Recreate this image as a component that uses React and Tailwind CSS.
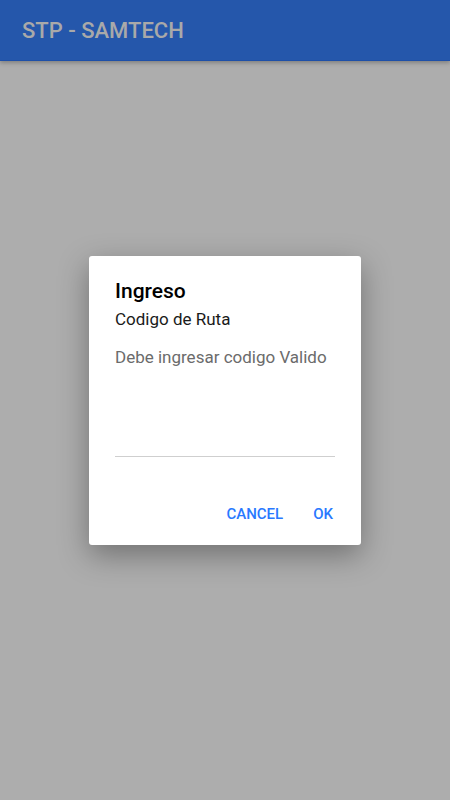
import React from "react";

const font = { fontFamily: "Roboto, 'Noto Sans', sans-serif" };

export default function App() {
  return (
    <div className="flex flex-col w-[450px] h-[800px] bg-[#adadad]" style={font}>
      <header className="h-[61px] shrink-0 flex items-center px-[22px] bg-[#2557ab] border-b border-[#1d4fa8] shadow-[0_2px_4px_rgba(0,0,0,0.25)]">
        <h1 className="text-[22px] font-medium text-[#a9a9a9]">STP - SAMTECH</h1>
      </header>
      <main className="flex-1 flex justify-center">
        <div className="mt-[195px] w-[272px] h-[289px] bg-white rounded-[3px] shadow-[0_10px_30px_rgba(0,0,0,0.35)] flex flex-col px-[26px]">
          <h2 className="mt-[21px] text-[21px] leading-[28px] font-medium text-black">Ingreso</h2>
          <p className="mt-[2px] text-[17px] leading-[24px] text-[#1a1a1a]">Codigo de Ruta</p>
          <p className="mt-[14px] text-[17px] leading-[24px] text-[#6b6b6b]">Debe ingresar codigo Valido</p>
          <div className="mt-[87px] h-px bg-[#cfcfcf]" />
          <div className="mt-[46px] flex justify-end gap-[30px] pr-[2px]">
            <button className="text-[15px] font-medium text-[#2979ff]">CANCEL</button>
            <button className="text-[15px] font-medium text-[#2979ff]">OK</button>
          </div>
        </div>
      </main>
    </div>
  );
}
